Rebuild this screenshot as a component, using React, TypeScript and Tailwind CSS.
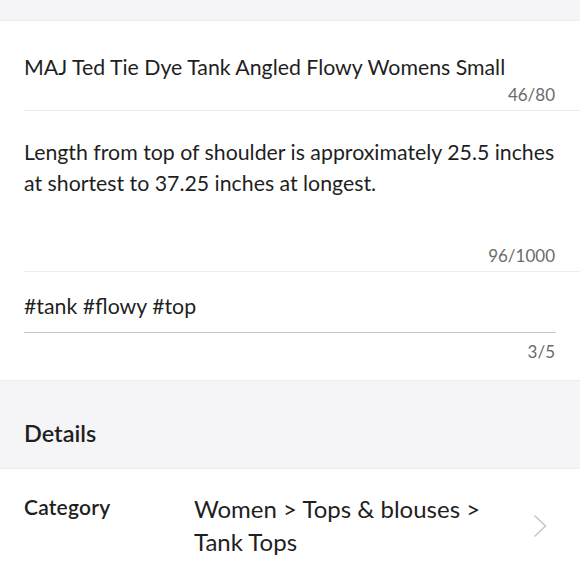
import * as React from 'react';

const font = { fontFamily: 'Lato, "Noto Sans", sans-serif' };

const Counter = ({ value }: { value: string }) => (
  <div className="pr-[25px] text-right text-[17px] leading-[20px] text-[#6b6b6b]">{value}</div>
);

const App = () => {
  return (
    <div className="h-[580px] w-[580px] overflow-hidden bg-white text-[#1f1f1f]" style={font}>
      <div className="h-[21px] border-b border-[#ececee] bg-[#f5f5f7]" />

      {/* title */}
      <div className="ml-6 border-b border-[#ececee] pt-[32px]">
        <div className="text-[21.3px] leading-[28px]">MAJ Ted Tie Dye Tank Angled Flowy Womens Small</div>
        <div className="pt-[4px] pb-[5px]">
          <Counter value="46/80" />
        </div>
      </div>

      {/* description */}
      <div className="ml-6 border-b border-[#ececee] pt-[26px]">
        <div className="pr-6 text-[21.3px] leading-[31px]">
          Length from top of shoulder is approximately 25.5 inches at shortest to 37.25 inches at longest.
        </div>
        <div className="pt-[47px] pb-[5px]">
          <Counter value="96/1000" />
        </div>
      </div>

      {/* tags */}
      <div className="px-6 pt-[20px]">
        <div className="border-b border-[#c9c9c9] pb-[12px] text-[21.3px] leading-[28px]">#tank #flowy #top</div>
      </div>
      <div className="pt-[9px] pb-[18px]">
        <Counter value="3/5" />
      </div>

      {/* details header */}
      <div className="flex h-[89px] items-end border-y border-[#ececee] bg-[#f5f5f7] px-6 pb-[21px]">
        <div className="text-[23.5px] font-semibold leading-[28px]">Details</div>
      </div>

      {/* category row */}
      <div className="flex items-start px-6 pt-[24px]">
        <div className="w-[170px] text-[21px] font-semibold leading-[28px] tracking-[0.01em]">Category</div>
        <div className="-mt-[1px] w-[300px] text-[24px] leading-[33px]">Women &gt; Tops &amp; blouses &gt; Tank Tops</div>
        <div className="flex h-[66px] flex-1 items-center justify-end pr-[9px]">
          <svg width="14" height="24" viewBox="0 0 14 24" fill="none">
            <path d="M1.5 1.5 L12.5 12 L1.5 22.5" stroke="#c8c8c8" strokeWidth="1.6" />
          </svg>
        </div>
      </div>
    </div>
  );
};

export default App;
